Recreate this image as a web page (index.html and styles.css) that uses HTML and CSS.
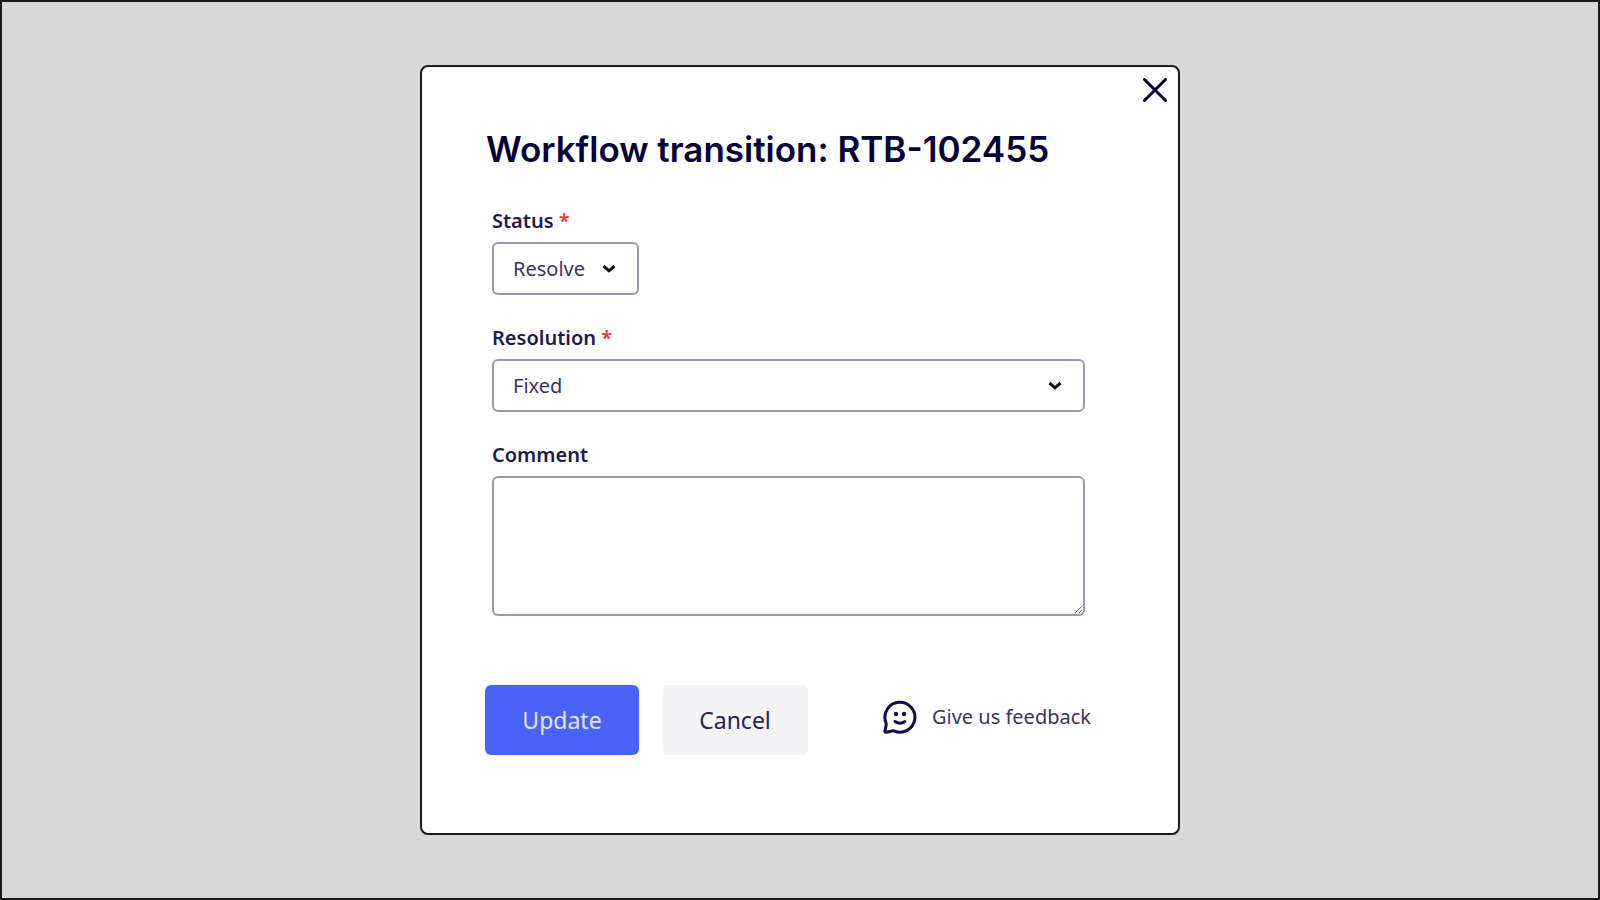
FILE: index.html
```html
<!DOCTYPE html>
<html lang="en">
<head>
<meta charset="utf-8">
<title>Workflow transition: RTB-102455</title>
<link rel="stylesheet" href="styles.css">
</head>
<body>
<main class="dialog" role="dialog" aria-labelledby="dialog-title">
  <div class="dialog-bar">
    <button class="close" type="button" aria-label="Close">
      <svg width="24" height="24" viewBox="0 0 24 24" fill="none" stroke="currentColor" stroke-width="3" stroke-linecap="round"><path d="M1.500 1.500l21 21M22.500 1.500l-21 21"/></svg>
    </button>
  </div>
  <h1 class="title" id="dialog-title">Workflow transition: RTB-102455</h1>
  <form class="form">
    <div class="fields">
      <div class="field">
        <label class="label" for="status">Status <span class="required">*</span></label>
        <div class="select select-short">
          <select class="control" id="status" required><option>Resolve</option></select>
          <svg class="chevron" width="14" height="10" viewBox="0 0 14 10" fill="none" stroke="currentColor" stroke-width="3"><path d="M1.500 2L7 6.800 12.500 2"/></svg>
        </div>
      </div>
      <div class="field">
        <label class="label" for="resolution">Resolution <span class="required">*</span></label>
        <div class="select">
          <select class="control" id="resolution" required><option>Fixed</option></select>
          <svg class="chevron" width="14" height="10" viewBox="0 0 14 10" fill="none" stroke="currentColor" stroke-width="3"><path d="M1.500 2L7 6.800 12.500 2"/></svg>
        </div>
      </div>
      <div class="field">
        <label class="label" for="comment">Comment</label>
        <textarea class="control comment" id="comment"></textarea>
      </div>
    </div>
    <div class="actions">
      <button class="button button-primary" type="button">Update</button>
      <button class="button" type="button">Cancel</button>
      <a class="feedback" href="#feedback">
        <svg width="34" height="34" viewBox="0 0 34 34" fill="none" stroke="currentColor" stroke-width="3" stroke-linecap="round" stroke-linejoin="round"><path d="M2.800 22.300A15 15 0 1 1 11 31Q9.800 30.500 8 31.200L3.200 32.200Q1.600 32.300 2 30.600L3 26Q3.500 24 2.800 22.300Z"/><path d="M12 21.500Q17 25 22 21.500"/><g fill="currentColor" stroke="none"><circle cx="13" cy="14" r="2.200"/><circle cx="21" cy="14" r="2.200"/></g></svg>
        <span>Give us feedback</span>
      </a>
    </div>
  </form>
</main>
</body>
</html>
```

FILE: styles.css
```css
* {
  box-sizing: border-box;
}

body {
  margin: 0;
  min-height: 100vh;
  display: flex;
  align-items: center;
  justify-content: center;
  border: 2px solid #1a1a1a;
  background: #d9d9d9;
  color: #1f1a4d;
  font-family: "Noto Sans", "Open Sans", sans-serif;
  font-size: 20px;
  line-height: 28px;
}

.dialog {
  width: 100%;
  max-width: 760px;
  padding-bottom: 78px;
  border: 2px solid #1a1a1a;
  border-radius: 8px;
  background: #fff;
}

.dialog-bar {
  display: flex;
  justify-content: flex-end;
  padding: 7px;
}

.close {
  display: flex;
  padding: 4px;
  border: 0;
  background: none;
  color: #050038;
  cursor: pointer;
}

.title {
  margin: 12px 64px 34px;
  color: #050038;
  font-family: Inter, sans-serif;
  font-size: 35px;
  font-weight: 600;
  line-height: 48px;
}

.form {
  padding: 0 87px 0 63px;
}

.fields {
  display: flex;
  flex-direction: column;
  gap: 29px;
  padding: 0 6px 0 7px;
}

.field {
  display: flex;
  flex-direction: column;
  gap: 7px;
}

.label {
  font-weight: 600;
}

.required {
  color: #d9412f;
}

.select {
  display: grid;
  align-items: center;
}

.select-short {
  align-self: flex-start;
  width: 147px;
}

.select > * {
  grid-area: 1 / 1;
}

.control {
  width: 100%;
  padding: 11px 19px;
  border: 2px solid #9c97b2;
  border-radius: 6px;
  background: #fff;
  color: #39345f;
  font: inherit;
  appearance: none;
}

.select .control {
  height: 53px;
}

.chevron {
  justify-self: end;
  margin-right: 23px;
  color: #111;
  pointer-events: none;
}

.comment {
  display: block;
  height: 140px;
  resize: vertical;
}

.actions {
  display: flex;
  gap: 23px;
  margin-top: 69px;
}

.button {
  width: 146px;
  height: 70px;
  border: 0;
  border-radius: 6px;
  background: #f4f4f7;
  color: #292450;
  font: inherit;
  font-size: 23px;
  cursor: pointer;
}

.button-primary {
  width: 154px;
  background: #4962f8;
  color: #e3e7ff;
}

.feedback {
  display: flex;
  align-items: center;
  gap: 15px;
  height: 64px;
  margin-left: auto;
  color: #39345f;
  text-decoration: none;
  white-space: nowrap;
}

.feedback svg {
  color: #120b45;
}
```
